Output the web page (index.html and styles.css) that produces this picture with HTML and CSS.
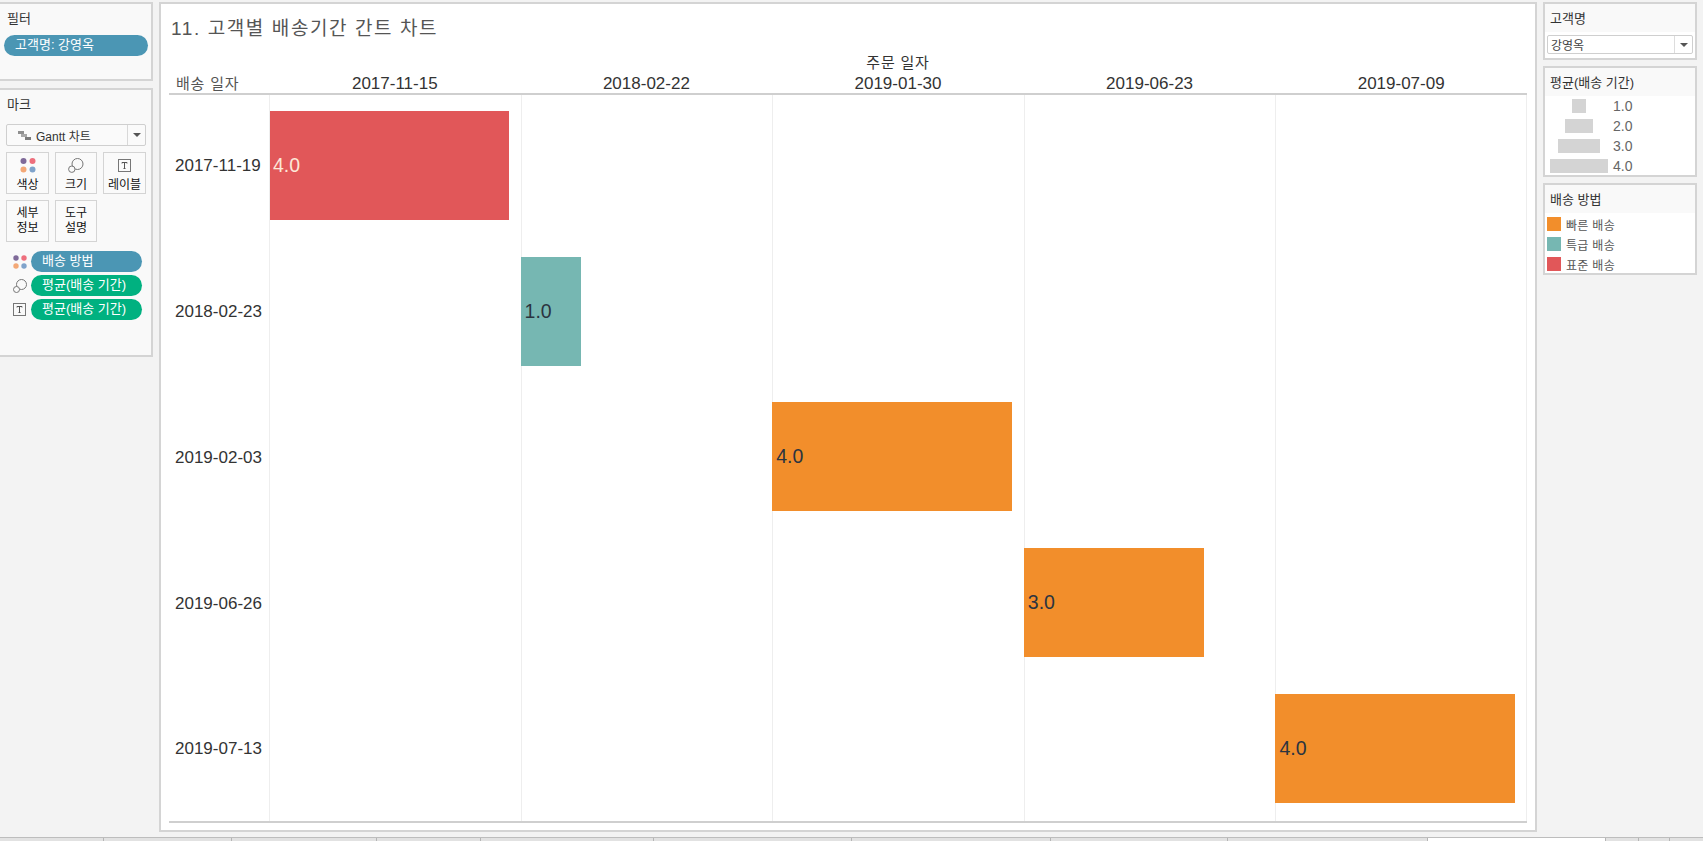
FILE: index.html
```html
<!DOCTYPE html>
<html lang="ko">
<head>
    <meta charset="UTF-8">
    <title>11. 고객별 배송기간 간트 차트</title>
    <link rel="stylesheet" href="styles.css">
</head>
<body>
    <div class="workspace">
        <!-- 왼쪽 패널 -->
        <aside class="left-col">
            <section class="shelf filter-shelf">
                <div class="shelf-title">필터</div>
                <div class="pill pill-filter">고객명: 강영옥</div>
            </section>
            <section class="shelf marks-shelf">
                <div class="shelf-title">마크</div>
                <div class="mark-type">
                    <svg class="gantt-icon" width="13" height="9" viewBox="0 0 13 9">
                        <path d="M0 0h6v3H0z" fill="#8f8f8f"/>
                        <path d="M3 3h6v3H3z" fill="#a8a8a8"/>
                        <path d="M7 6h6v3H7z" fill="#7c7c7c"/>
                    </svg>
                    <span class="mark-type-name">Gantt 차트</span>
                    <span class="mark-type-arrow"><i class="arrow"></i></span>
                </div>
                <div class="mark-buttons">
                    <div class="mark-btn">
                        <svg width="16" height="15" viewBox="0 0 16 15">
                            <circle cx="3.5" cy="3" r="3" fill="#7f6a99"/>
                            <circle cx="12.5" cy="3" r="3" fill="#ee6f7d"/>
                            <circle cx="3.5" cy="11.5" r="3" fill="#f3a877"/>
                            <circle cx="12.5" cy="11.5" r="3" fill="#7fa3cb"/>
                        </svg>
                        <span>색상</span>
                    </div>
                    <div class="mark-btn">
                        <svg width="16" height="15" viewBox="0 0 16 15" fill="none" stroke="#777">
                            <circle cx="9.5" cy="6" r="5.5"/>
                            <circle cx="3.8" cy="11.2" r="3.2" fill="#fafafa"/>
                        </svg>
                        <span>크기</span>
                    </div>
                    <div class="mark-btn">
                        <svg width="13" height="15" viewBox="0 0 13 15">
                            <rect x="0.5" y="1.5" width="12" height="12" fill="none" stroke="#777"/>
                            <path d="M4 5.5V4.5h5v1M6.5 4.5v6M5.5 10.5h2" fill="none" stroke="#555"/>
                        </svg>
                        <span>레이블</span>
                    </div>
                    <div class="mark-btn mark-btn-text">세부<br>정보</div>
                    <div class="mark-btn mark-btn-text">도구<br>설명</div>
                </div>
                <div class="mark-fields">
                    <div class="mark-field">
                        <svg width="14" height="14" viewBox="0 0 14 14">
                            <circle cx="3" cy="3" r="2.7" fill="#7f6a99"/>
                            <circle cx="11" cy="3" r="2.7" fill="#ee6f7d"/>
                            <circle cx="3" cy="11" r="2.7" fill="#f3a877"/>
                            <circle cx="11" cy="11" r="2.7" fill="#7fa3cb"/>
                        </svg>
                        <div class="pill pill-blue">배송 방법</div>
                    </div>
                    <div class="mark-field">
                        <svg width="14" height="14" viewBox="0 0 14 14" fill="none" stroke="#777">
                            <circle cx="8.5" cy="5.5" r="5"/>
                            <circle cx="3.5" cy="10.5" r="3" fill="#fafafa"/>
                        </svg>
                        <div class="pill pill-green">평균(배송 기간)</div>
                    </div>
                    <div class="mark-field">
                        <svg width="14" height="14" viewBox="0 0 14 14">
                            <rect x="0.5" y="0.5" width="12" height="12" fill="none" stroke="#777"/>
                            <path d="M4 4.5V3.5h5v1M6.5 3.5v6M5.5 9.5h2" fill="none" stroke="#555"/>
                        </svg>
                        <div class="pill pill-green">평균(배송 기간)</div>
                    </div>
                </div>
            </section>
        </aside>

        <!-- 차트 -->
        <main class="sheet">
            <h1 class="sheet-title">11. 고객별 배송기간 간트 차트</h1>
            <div class="chart">
                <div class="chart-top-label">주문 일자</div>
                <div class="chart-header">
                    <div class="row-head row-head-title">배송 일자</div>
                    <div class="col-head">2017-11-15</div>
                    <div class="col-head">2018-02-22</div>
                    <div class="col-head">2019-01-30</div>
                    <div class="col-head">2019-06-23</div>
                    <div class="col-head">2019-07-09</div>
                </div>
                <div class="chart-body">
                    <div class="chart-row">
                        <div class="row-head">2017-11-19</div>
                        <div class="pane"><div class="bar bar-red" style="width: 239px">4.0</div></div>
                        <div class="pane"></div><div class="pane"></div><div class="pane"></div><div class="pane"></div>
                    </div>
                    <div class="chart-row">
                        <div class="row-head">2018-02-23</div>
                        <div class="pane"></div>
                        <div class="pane"><div class="bar bar-teal" style="width: 60px">1.0</div></div>
                        <div class="pane"></div><div class="pane"></div><div class="pane"></div>
                    </div>
                    <div class="chart-row">
                        <div class="row-head">2019-02-03</div>
                        <div class="pane"></div><div class="pane"></div>
                        <div class="pane"><div class="bar bar-orange" style="width: 240px">4.0</div></div>
                        <div class="pane"></div><div class="pane"></div>
                    </div>
                    <div class="chart-row">
                        <div class="row-head">2019-06-26</div>
                        <div class="pane"></div><div class="pane"></div><div class="pane"></div>
                        <div class="pane"><div class="bar bar-orange" style="width: 180px">3.0</div></div>
                        <div class="pane"></div>
                    </div>
                    <div class="chart-row">
                        <div class="row-head">2019-07-13</div>
                        <div class="pane"></div><div class="pane"></div><div class="pane"></div><div class="pane"></div>
                        <div class="pane"><div class="bar bar-orange" style="width: 240px">4.0</div></div>
                    </div>
                </div>
            </div>
        </main>

        <!-- 오른쪽 범례 -->
        <aside class="right-col">
            <section class="card">
                <div class="card-title">고객명</div>
                <div class="select">
                    <span class="select-value">강영옥</span>
                    <span class="select-arrow"><i class="arrow"></i></span>
                </div>
            </section>
            <section class="card">
                <div class="card-title">평균(배송 기간)</div>
                <div class="size-legend">
                    <div class="size-row"><span class="size-cell"><i class="size-box" style="width: 14px"></i></span>1.0</div>
                    <div class="size-row"><span class="size-cell"><i class="size-box" style="width: 28px"></i></span>2.0</div>
                    <div class="size-row"><span class="size-cell"><i class="size-box" style="width: 42px"></i></span>3.0</div>
                    <div class="size-row"><span class="size-cell"><i class="size-box" style="width: 58px"></i></span>4.0</div>
                </div>
            </section>
            <section class="card">
                <div class="card-title">배송 방법</div>
                <div class="color-legend">
                    <div class="color-row"><i class="swatch bar-orange"></i>빠른 배송</div>
                    <div class="color-row"><i class="swatch bar-teal"></i>특급 배송</div>
                    <div class="color-row"><i class="swatch bar-red"></i>표준 배송</div>
                </div>
            </section>
        </aside>
    </div>

    <!-- 시트 탭 -->
    <div class="tabs">
        <div class="tab" style="width: 104px"></div>
        <div class="tab" style="width: 128px"></div>
        <div class="tab" style="width: 145px"></div>
        <div class="tab" style="width: 104px"></div>
        <div class="tab" style="width: 173px"></div>
        <div class="tab" style="width: 198px"></div>
        <div class="tab" style="width: 199px"></div>
        <div class="tab" style="width: 177px"></div>
        <div class="tab" style="width: 200px"></div>
        <div class="tab tab-active" style="width: 178px"></div>
        <div class="tab" style="width: 33px"></div>
        <div class="tab" style="width: 31px"></div>
    </div>
</body>
</html>
```

FILE: styles.css
```css
* {
    box-sizing: border-box;
}
html, body {
    margin: 0;
    padding: 0;
    height: 100%;
}
body {
    width: 1703px;
    height: 841px;
    overflow: hidden;
    background-color: #f3f3f3;
    font-family: "Liberation Sans", "Noto Sans CJK KR", sans-serif;
    color: #333;
    display: flex;
    flex-direction: column;
}
.workspace {
    height: 837px;
    padding: 2px 6px 5px 0;
    display: flex;
    gap: 6px;
}

/* left column */
.left-col {
    width: 153px;
    flex: none;
    display: flex;
    flex-direction: column;
    gap: 7px;
}
.shelf {
    background-color: #f9f9f9;
    border: 2px solid #d4d4d4;
    border-left: none;
    padding: 0 4px 0 0;
}
.filter-shelf {
    height: 79px;
}
.marks-shelf {
    height: 269px;
}
.shelf-title {
    font-size: 13px;
    line-height: 16px;
    color: #333;
    padding: 7px 0 0 7px;
    height: 31px;
}
.pill {
    border-radius: 11px;
    height: 21px;
    line-height: 19px;
    font-size: 13px;
    color: #fff;
}
.pill-filter {
    background-color: #4b96b4;
    margin-left: 4px;
    width: 144px;
    padding-left: 11px;
}
.pill-blue {
    background-color: #4b96b4;
}
.pill-green {
    background-color: #00b180;
}
.marks-shelf .shelf-title {
    height: 34px;
    padding-top: 7px;
}
.mark-type {
    margin-left: 6px;
    width: 140px;
    height: 22px;
    background-color: #fafafa;
    border: 1px solid #cfcfcf;
    border-radius: 2px;
    display: flex;
    align-items: center;
    font-size: 12px;
    color: #333;
}
.gantt-icon {
    margin-left: 11px;
    flex: none;
}
.mark-type-name {
    margin-left: 5px;
    flex: 1;
}
.mark-type-arrow {
    width: 18px;
    height: 100%;
    border-left: 1px solid #d8d8d8;
    display: flex;
    align-items: center;
    justify-content: center;
}
.arrow {
    display: block;
    border-left: 4px solid transparent;
    border-right: 4px solid transparent;
    border-top: 4px solid #555;
}
.mark-buttons {
    margin: 6px 0 0 6px;
    display: grid;
    grid-template-columns: 43px 42px 43px;
    grid-auto-rows: 42px;
    column-gap: 6px;
    row-gap: 6px;
}
.mark-btn {
    border: 1px solid #d4d4d4;
    background-color: #fafafa;
    font-size: 12px;
    font-weight: 400;
    line-height: 15px;
    color: #111;
    display: flex;
    flex-direction: column;
    align-items: center;
    padding-top: 5px;
}
.mark-btn svg {
    margin-bottom: 5px;
}
.mark-btn-text {
    justify-content: center;
    text-align: center;
    padding-top: 0;
}
.mark-fields {
    margin: 9px 0 0 13px;
    display: flex;
    flex-direction: column;
    gap: 3px;
}
.mark-field {
    display: flex;
    align-items: center;
    gap: 4px;
}
.mark-field svg {
    flex: none;
}
.mark-field .pill {
    width: 111px;
    padding-left: 11px;
}

/* sheet */
.sheet {
    width: 1378px;
    flex: none;
    background-color: #fff;
    border: 2px solid #d4d4d4;
    display: flex;
    flex-direction: column;
    padding: 0 8px 0 8px;
}
.sheet-title {
    margin: 0;
    padding: 13px 0 0 2px;
    height: 50px;
    font-size: 19px;
    line-height: 24px;
    font-weight: 400;
    letter-spacing: 1.6px;
    color: #555;
}
.chart {
    display: flex;
    flex-direction: column;
}
.chart-top-label {
    height: 20px;
    padding-left: 100px;
    text-align: center;
    font-size: 15px;
    line-height: 18px;
    letter-spacing: 0.8px;
    color: #333;
}
.chart-header, .chart-row {
    display: grid;
    grid-template-columns: 100px repeat(5, 251.6px);
}
.chart-header {
    height: 21px;
    border-bottom: 2px solid #cfcfcf;
    align-items: center;
    position: relative;
    z-index: 1;
}
.col-head {
    text-align: center;
    font-size: 17px;
    line-height: 18px;
    color: #333;
}
.row-head {
    padding: 2px 0 0 6px;
    font-size: 17px;
    color: #333;
    align-self: center;
}
.row-head-title {
    padding: 0 0 0 7px;
    font-size: 15px;
    letter-spacing: 0.8px;
    line-height: 18px;
    color: #555;
}
.chart-body {
    margin-top: -2.4px;
    height: 730.75px;
    border-bottom: 2px solid #cfcfcf;
    display: grid;
    grid-template-rows: repeat(5, 145.75px);
}
.pane {
    border-left: 1px solid #eeeeee;
    display: flex;
    align-items: center;
}
.chart-row .pane:last-child {
    border-right: 1px solid #eeeeee;
}
.bar {
    height: 109px;
    margin-left: -1px;
    display: flex;
    align-items: center;
    padding-left: 4px;
    font-size: 19.5px;
    color: #2b3440;
}
.bar-red {
    background-color: #e15759;
}
.bar.bar-red {
    margin-left: 0;
    padding-left: 3px;
    color: #fde8d8;
}
.bar-teal {
    background-color: #76b7b2;
}
.bar-orange {
    background-color: #f28e2b;
}

/* right column */
.right-col {
    width: 154px;
    flex: none;
    display: flex;
    flex-direction: column;
    gap: 6px;
}
.card {
    background-color: #fff;
    border: 2px solid #d4d4d4;
}
.card-title {
    height: 28px;
    padding: 7px 0 0 5px;
    background-color: #f9f9f9;
    font-size: 13px;
    line-height: 16px;
    color: #333;
}
.select {
    margin: 3px 2px 4px 2px;
    height: 19px;
    border: 1px solid #cfcfcf;
    border-radius: 2px;
    background-color: #fff;
    display: flex;
    align-items: center;
    font-size: 12px;
    color: #444;
}
.select-value {
    flex: 1;
    padding-left: 3px;
}
.select-arrow {
    width: 18px;
    height: 100%;
    border-left: 1px solid #ddd;
    display: flex;
    align-items: center;
    justify-content: center;
}
.size-legend {
    padding: 3px 0 2px;
    display: flex;
    flex-direction: column;
    gap: 6px;
}
.size-row {
    height: 14px;
    display: flex;
    align-items: center;
    font-size: 14px;
    color: #666;
}
.size-cell {
    width: 68px;
    display: flex;
    justify-content: center;
}
.size-box {
    display: block;
    height: 14px;
    background-color: #d4d4d4;
}
.color-legend {
    padding: 4px 0 2px 2px;
    display: flex;
    flex-direction: column;
    gap: 6px;
}
.color-row {
    height: 14px;
    display: flex;
    align-items: center;
    gap: 5px;
    font-size: 12px;
    letter-spacing: 0.3px;
    color: #555;
}
.swatch {
    display: block;
    width: 14px;
    height: 14px;
}

/* tabs */
.tabs {
    height: 4px;
    border-top: 1px solid #bdbdbd;
    background-color: #e2e2e2;
    display: flex;
}
.tab {
    flex: none;
    border-right: 1px solid #b5b5b5;
}
.tab-active {
    background-color: #fff;
}
```
